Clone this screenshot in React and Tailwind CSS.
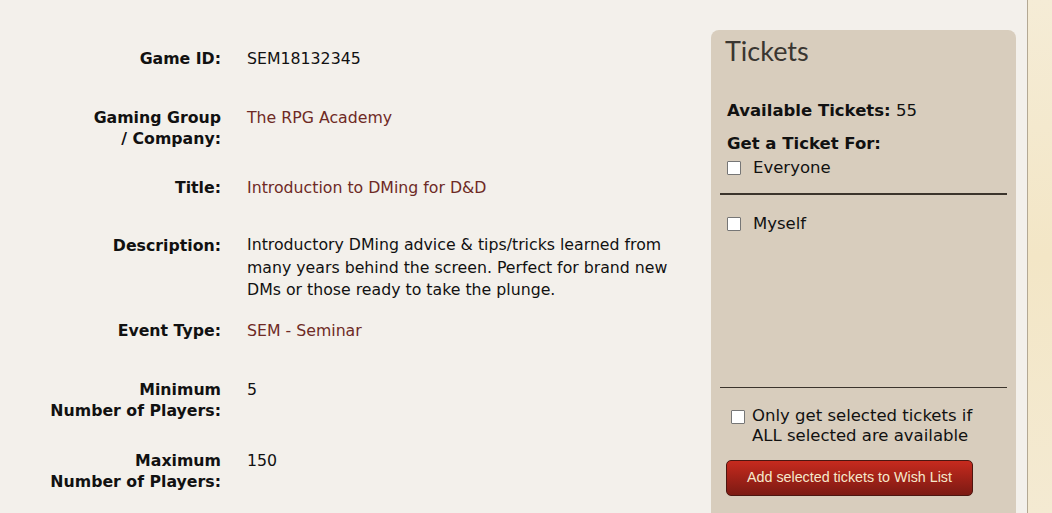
export default function App() {
  const rows = [
    { label: ["Game ID:"], value: "SEM18132345", link: false, h: "h-[59px]" },
    { label: ["Gaming Group", "/ Company:"], value: "The RPG Academy", link: true, h: "h-[70px]" },
    { label: ["Title:"], value: "Introduction to DMing for D&D", link: true, h: "h-[58px]" },
    {
      label: ["Description:"],
      value:
        "Introductory DMing advice & tips/tricks learned from many years behind the screen. Perfect for brand new DMs or those ready to take the plunge.",
      link: false,
      h: "h-[85px]",
      desc: true,
    },
    { label: ["Event Type:"], value: "SEM - Seminar", link: true, h: "h-[59px]" },
    { label: ["Minimum", "Number of Players:"], value: "5", link: false, h: "h-[71px]" },
    { label: ["Maximum", "Number of Players:"], value: "150", link: false, h: "h-[70px]" },
  ];

  const Box = ({ cls = "" }) => (
    <span className={"inline-block w-[14px] h-[14px] bg-white border border-[#767676] rounded-[1px] shrink-0 " + cls}></span>
  );

  return (
    <div className="w-[1052px] h-[513px] overflow-hidden flex bg-[#f3f0eb] font-['DejaVu_Sans',sans-serif] text-[16px] text-[#111]">
      <div className="w-[1027px] flex shrink-0">
        <div className="w-[711px] shrink-0 pt-[48px]">
          {rows.map((r, i) => (
            <div key={i} className={"flex " + r.h}>
              <div className="w-[221px] shrink-0 text-right font-bold text-[15.75px] leading-[21px]">
                {r.label.map((l, j) => (
                  <div key={j}>{l}</div>
                ))}
              </div>
              <div
                className={
                  "ml-[26px] w-[430px] text-[15.75px] " +
                  (r.desc ? "leading-[22.5px] -mt-[1px] " : "leading-[21px] ") +
                  (r.link ? "text-[#6e2a25]" : "text-[#111]")
                }
              >
                {r.value}
              </div>
            </div>
          ))}
        </div>
        <div className="mt-[30px] w-[305px] shrink-0 bg-[#d8cdbd] rounded-t-[8px] flex flex-col text-[16.5px]">
          <div className="pl-[14px] pt-[4px] font-['Lato',sans-serif] text-[27px] leading-[34px] text-[#3a3631]">Tickets</div>
          <div className="pl-[16px] mt-[32px] leading-[21px]">
            <span className="font-bold">Available Tickets:</span> 55
          </div>
          <div className="pl-[16px] mt-[12px] font-bold leading-[21px]">Get a Ticket For:</div>
          <label className="pl-[16px] flex items-center gap-[12px] leading-[21px] mt-[3px]">
            <Box />
            <span>Everyone</span>
          </label>
          <div className="mx-[9px] mt-[15px] h-[2px] bg-[#3b342c]"></div>
          <label className="pl-[16px] flex items-center gap-[12px] leading-[21px] mt-[18px]">
            <Box />
            <span>Myself</span>
          </label>
          <div className="h-[153px]"></div>
          <div className="mx-[9px] h-[1px] bg-[#3b342c]"></div>
          <div className="pl-[20px] mt-[18px] flex items-start gap-[7px] leading-[20px]">
            <Box cls="mt-[4px]" />
            <span>
              Only get selected tickets if
              <br />
              ALL selected are available
            </span>
          </div>
          <div className="pl-[15px] mt-[14px]">
            <button className="w-[247px] h-[36px] rounded-[5px] border border-[#4d1610] bg-gradient-to-b from-[#c72a1e] to-[#7c1a13] text-[#f6e9cc] font-['Liberation_Sans',Arial,sans-serif] text-[14.3px]">
              Add selected tickets to Wish List
            </button>
          </div>
        </div>
      </div>
      <div className="w-[1px] bg-[#b3a893] shrink-0"></div>
      <div className="flex-1 bg-gradient-to-b from-[#f5ecd6] via-[#f3e6c6] to-[#f4ead2]"></div>
    </div>
  );
}
